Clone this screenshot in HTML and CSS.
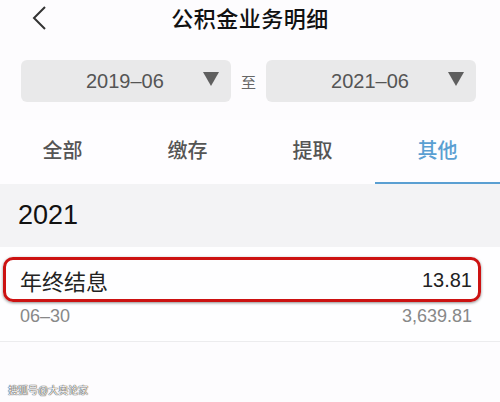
FILE: index.html
```html
<!DOCTYPE html>
<html lang="zh-CN">
<head>
    <meta charset="UTF-8">
    <meta name="viewport" content="width=device-width, initial-scale=1.0">
    <title>公积金业务明细</title>
    <link rel="stylesheet" href="styles.css">
</head>
<body>
    <div class="page">
        <header class="topbar">
            <a class="back" href="#">
                <svg width="16" height="26" viewBox="0 0 16 26">
                    <path d="M14 2 L3 13 L14 24" fill="none" stroke="#333" stroke-width="2"/>
                </svg>
            </a>
            <h1>公积金业务明细</h1>
            <span></span>
        </header>

        <div class="filters">
            <div class="picker">
                <span>2019–06</span>
                <i class="arrow"></i>
            </div>
            <span class="to">至</span>
            <div class="picker">
                <span>2021–06</span>
                <i class="arrow"></i>
            </div>
        </div>

        <nav class="tabs">
            <a href="#">全部</a>
            <a href="#">缴存</a>
            <a href="#">提取</a>
            <a href="#" class="active">其他</a>
        </nav>

        <div class="year">2021</div>

        <div class="record">
            <div class="row main">
                <span>年终结息</span>
                <span class="num">13.81</span>
            </div>
            <div class="row sub">
                <span>06–30</span>
                <span>3,639.81</span>
            </div>
            <div class="highlight"></div>
        </div>

        <div class="watermark">搜狐号@大奥论家</div>
    </div>
</body>
</html>
```

FILE: styles.css
```css
body {
    margin: 0;
    font-family: "Liberation Sans", "Noto Sans CJK SC", sans-serif;
    background: #fdfcfe;
}
.page {
    position: relative;
    width: 500px;
    height: 402px;
    overflow: hidden;
}
.topbar {
    display: grid;
    grid-template-columns: 1fr auto 1fr;
    align-items: center;
    height: 34px;
}
.back {
    display: flex;
    padding-left: 31px;
    padding-top: 2px;
}
.topbar h1 {
    margin: 0;
    font-size: 22px;
    font-weight: 500;
    color: #111;
    letter-spacing: 0.5px;
}
.filters {
    display: flex;
    align-items: center;
    gap: 10px;
    margin-top: 26px;
    padding: 0 24px 0 21px;
}
.picker {
    flex: 1;
    height: 42px;
    display: flex;
    align-items: center;
    justify-content: space-between;
    padding: 0 12px 0 65px;
    background: #e9e9ea;
    border-radius: 6px;
    font-size: 20px;
    color: #555;
}
.arrow {
    width: 0;
    height: 0;
    border-left: 8px solid transparent;
    border-right: 8px solid transparent;
    border-top: 14px solid #5f5f5f;
    margin-top: -4px;
}
.to {
    font-size: 15px;
    color: #666;
}
.tabs {
    display: grid;
    grid-template-columns: repeat(4, 1fr);
    margin-top: 18px;
    height: 64px;
    background: #fefdff;
}
.tabs a {
    display: flex;
    align-items: center;
    justify-content: center;
    padding-bottom: 4px;
    font-size: 20px;
    font-weight: 500;
    color: #555;
    text-decoration: none;
    border-bottom: 2px solid transparent;
}
.tabs a.active {
    color: #5a9fd2;
    border-bottom-color: #5a9fd2;
}
.year {
    height: 63px;
    display: flex;
    align-items: center;
    padding-left: 18px;
    background: #f3f3f5;
    font-size: 27px;
    color: #111;
}
.record {
    position: relative;
    background: #fefeff;
    padding: 20px 28px 14px 20px;
    border-bottom: 1px solid #ececee;
}
.row {
    display: flex;
    justify-content: space-between;
    align-items: center;
}
.main {
    font-size: 22px;
    color: #222;
    height: 26px;
}
.main .num {
    font-size: 20px;
}
.sub {
    margin-top: 12px;
    font-size: 18px;
    color: #888;
    height: 22px;
}
.highlight {
    position: absolute;
    left: 3px;
    top: 10px;
    width: 472px;
    height: 39px;
    border: 3px solid #cc1212;
    border-radius: 10px;
    box-shadow: 0 1px 3px rgba(0, 0, 0, 0.45);
}
.watermark {
    position: absolute;
    left: 8px;
    top: 382px;
    font-size: 10px;
    color: #fff;
    text-shadow: 0 0 1px #222, 0 0 1px #222;
}
```
